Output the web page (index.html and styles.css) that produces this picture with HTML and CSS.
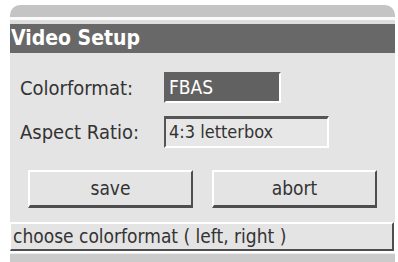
FILE: index.html
```html
<!DOCTYPE html>
<html>
<head>
<meta charset="utf-8">
<link rel="stylesheet" href="styles.css">
</head>
<body>
<div class="panel">
  <div class="topband"></div>
  <div class="sep-white"></div>
  <div class="sep-gray"></div>
  <div class="title">Video Setup</div>
  <div class="content">
    <div class="row">
      <div class="label">Colorformat:</div>
      <div class="field field-active">FBAS</div>
    </div>
    <div class="row row-second">
      <div class="label">Aspect Ratio:</div>
      <div class="field field-sunken">4:3 letterbox</div>
    </div>
    <div class="buttons">
      <div class="btn">save</div>
      <div class="btn">abort</div>
    </div>
  </div>
  <div class="status">choose colorformat ( left, right )</div>
  <div class="bottomband"></div>
</div>
</body>
</html>
```

FILE: styles.css
```css
html, body {
  margin: 0;
  padding: 0;
  background: #ffffff;
  width: 398px;
  height: 262px;
  overflow: hidden;
}

body {
  font-family: "DejaVu Sans Condensed", "DejaVu Sans", sans-serif;
  font-stretch: condensed;
  color: #333333;
}

.panel {
  margin-left: 10px;
  width: 385px;
  display: flex;
  flex-direction: column;
}

.topband {
  margin-top: 5px;
  height: 12px;
  background: #c4c4c4;
  border-radius: 10px 10px 0 0;
}

.sep-white {
  height: 3px;
  background: #fafafa;
}

.sep-gray {
  height: 4px;
  background: #dedede;
}

.title {
  height: 29px;
  background: #686868;
  color: #ffffff;
  font-weight: bold;
  font-size: 21px;
  line-height: 29px;
  padding-left: 1px;
}

.content {
  background: #e4e4e4;
  padding: 19px 0 14px 0;
  display: flex;
  flex-direction: column;
}

.row {
  display: flex;
  align-items: center;
}

.row-second {
  margin-top: 13px;
}

.label {
  width: 154px;
  padding-left: 10px;
  box-sizing: border-box;
  font-size: 20px;
}

.field {
  box-sizing: border-box;
  height: 31px;
  font-size: 18px;
  line-height: 27px;
  padding-left: 3px;
}

.field-active {
  width: 117px;
  background: #616161;
  color: #ffffff;
  font-size: 19px;
  border-top: 2px solid #616161;
  border-left: 2px solid #616161;
  border-right: 2px solid #ffffff;
  border-bottom: 2px solid #ffffff;
}

.field-sunken {
  width: 165px;
  height: 32px;
  background: #e7e7e7;
  color: #333333;
  border-top: 3px solid #555555;
  border-left: 2px solid #555555;
  border-right: 2px solid #ffffff;
  border-bottom: 2px solid #ffffff;
  line-height: 26px;
}

.buttons {
  display: flex;
  gap: 19px;
  margin-top: 22px;
  padding-left: 18px;
}

.btn {
  box-sizing: border-box;
  width: 165px;
  height: 38px;
  border-top: 2px solid #ffffff;
  border-left: 2px solid #ffffff;
  border-right: 2px solid #4e4e4e;
  border-bottom: 3px solid #4e4e4e;
  background: #e4e4e4;
  text-align: center;
  font-size: 19px;
  line-height: 32px;
}

.status {
  box-sizing: border-box;
  height: 29px;
  background: #e4e4e4;
  border-top: 2px solid #ffffff;
  border-left: 1px solid #ffffff;
  border-right: 2px solid #4e4e4e;
  border-bottom: 2px solid #4e4e4e;
  font-size: 19px;
  line-height: 25px;
  padding-left: 2px;
  margin-right: 1px;
  white-space: nowrap;
  overflow: hidden;
}

.bottomband {
  margin-top: 2px;
  height: 10px;
  background: #cbcbcb;
  border-top: 1px solid #ececec;
}
```
